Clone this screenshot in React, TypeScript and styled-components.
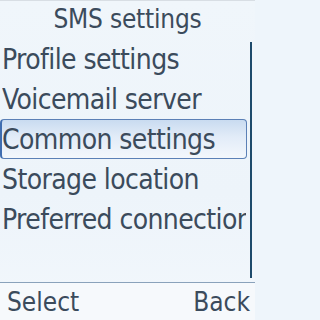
import React from 'react';
import styled, { createGlobalStyle } from 'styled-components';

const GlobalStyle = createGlobalStyle`
  html, body {
    margin: 0;
    padding: 0;
    background: #eef5fb;
  }
`;

const items = [
  'Profile settings',
  'Voicemail server',
  'Common settings',
  'Storage location',
  'Preferred connection',
];

const App = () => {
  return (
    <Screen>
      <GlobalStyle />
      <Title>SMS settings</Title>
      <Body>
        <List>
          {items.map((label, i) => (
            <Row key={label} $selected={i === 2}>
              {label}
            </Row>
          ))}
        </List>
        <ScrollBar />
      </Body>
      <SoftKeys>
        <SoftKey>Select</SoftKey>
        <SoftKey>Back</SoftKey>
      </SoftKeys>
    </Screen>
  );
};

export default App;

/* Styled Components */
const Screen = styled.div`
  width: 255px;
  height: 320px;
  display: flex;
  flex-direction: column;
  background: linear-gradient(180deg, #f0f6fb 0%, #edf4fa 60%, #f2f7fc 100%);
  border-top: 1px solid #d8dee4;
  box-sizing: border-box;
  font-family: 'DejaVu Sans Condensed', 'DejaVu Sans', sans-serif;
  color: #3b4b5c;
  overflow: hidden;
`;

const Title = styled.div`
  height: 38px;
  display: flex;
  align-items: center;
  justify-content: center;
  font-size: 26px;
  letter-spacing: -0.2px;
  padding-bottom: 3px;
  box-sizing: border-box;
`;

const Body = styled.div`
  position: relative;
  flex: 1;
`;

const List = styled.div`
  display: flex;
  flex-direction: column;
  width: 247px;
`;

const Row = styled.div<{ $selected?: boolean }>`
  height: 40px;
  display: flex;
  align-items: center;
  font-size: 28px;
  letter-spacing: -0.6px;
  white-space: nowrap;
  overflow: hidden;
  box-sizing: border-box;
  padding-left: 0;
  border-radius: 4px;
  border: 1px solid ${(p) => (p.$selected ? '#5b80b6' : 'transparent')};
  border-left: 2px solid ${(p) => (p.$selected ? '#3f6db0' : 'transparent')};
  background: ${(p) =>
    p.$selected
      ? 'linear-gradient(180deg, #c9dbf0 0%, #e2ecf8 45%, #f3f7fc 100%)'
      : 'transparent'};
`;

const ScrollBar = styled.div`
  position: absolute;
  top: 3px;
  bottom: 4px;
  right: 3px;
  width: 2px;
  background: #1d4a6b;
`;

const SoftKeys = styled.div`
  height: 37px;
  display: flex;
  align-items: center;
  justify-content: space-between;
  padding: 0 5px 0 7px;
  border-top: 1px solid #8aa2bb;
  background: #f6f9fc;
  font-size: 26px;
`;

const SoftKey = styled.span`
  line-height: 1;
`;
